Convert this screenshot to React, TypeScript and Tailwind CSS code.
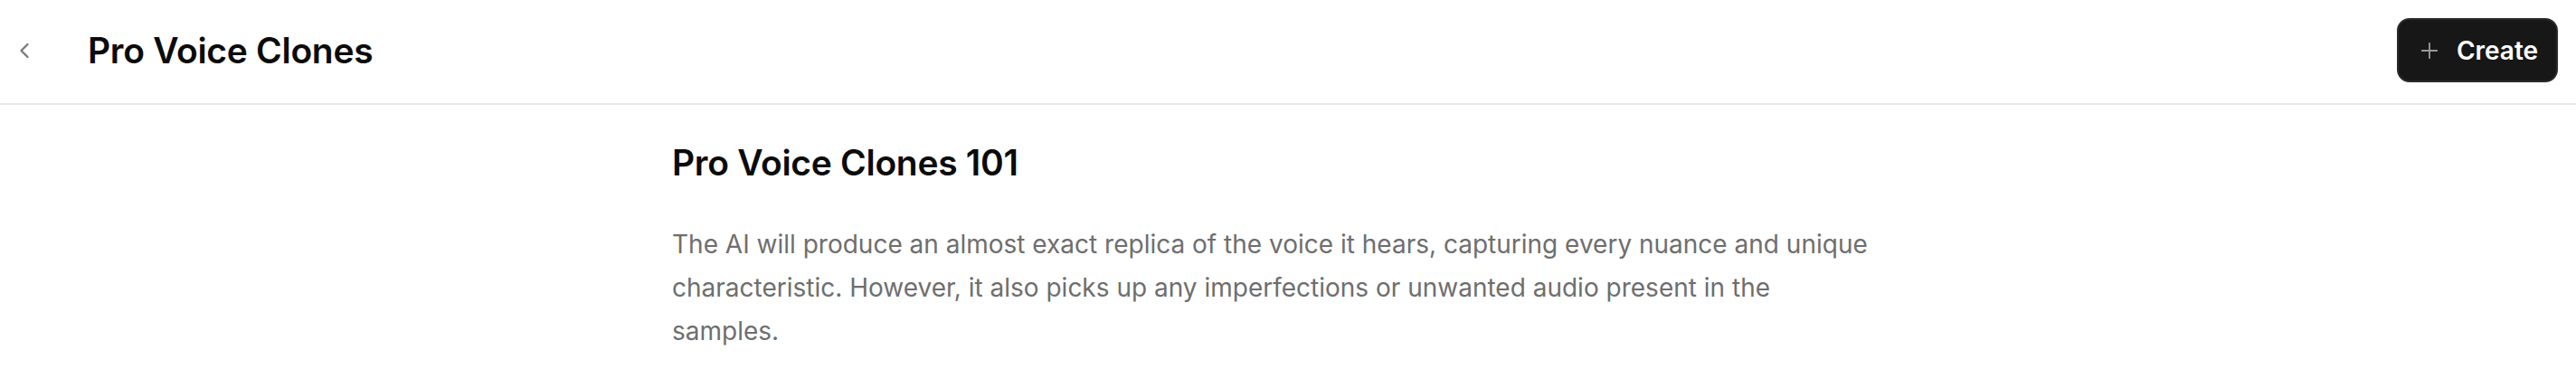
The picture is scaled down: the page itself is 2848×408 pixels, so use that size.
import React from 'react';
import { ChevronLeft, Plus } from 'lucide-react';

const font = { fontFamily: 'Inter, "Noto Sans", sans-serif' };

export default function App() {
  return (
    <div className="min-h-[408px] w-full bg-white" style={font}>
      <header className="flex h-[116px] items-center justify-between border-b-2 border-[#e9e9ee] pb-[3px] pl-[13px] pr-[20px]">
        <div className="flex items-center gap-[56px]">
          <button className="flex h-[28px] w-[28px] items-center justify-center text-[#7a7a7a]">
            <ChevronLeft size={28} strokeWidth={2} />
          </button>
          <h1 className="text-[39px] font-semibold leading-[48px] tracking-[-0.3px] text-[#0b0b0b]">
            Pro Voice Clones
          </h1>
        </div>
        <button className="flex h-[71px] w-[178px] items-center justify-center gap-[16px] rounded-[14px] border-2 border-[#2a2a2a] bg-[#171717] text-[28px] font-semibold text-white">
          <Plus size={28} strokeWidth={1.6} className="text-[#9a9a9a]" />
          <span>Create</span>
        </button>
      </header>

      <main className="pl-[743px] pt-[40px]">
        <div className="w-[1340px]">
          <h2 className="text-[39px] font-semibold leading-[48px] tracking-[-0.3px] text-[#0b0b0b]">
            Pro Voice Clones 101
          </h2>
          <p className="mt-[42px] text-[28px] leading-[48px] text-[#6e6e6e]">
            The AI will produce an almost exact replica of the voice it hears, capturing every nuance and unique
            characteristic. However, it also picks up any imperfections or unwanted audio present in the samples.
          </p>
        </div>
      </main>
    </div>
  );
}
